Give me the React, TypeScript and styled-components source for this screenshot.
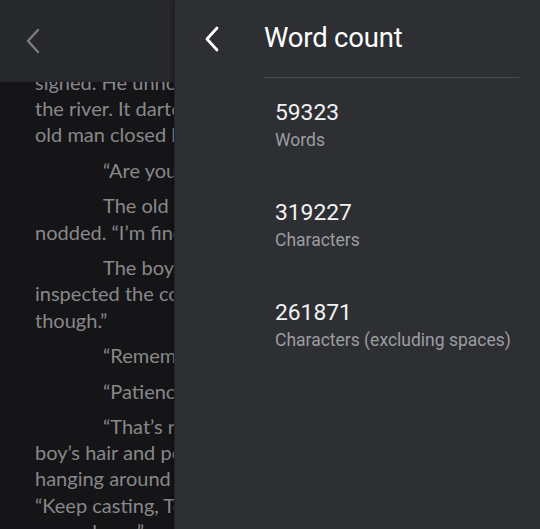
import styled, { createGlobalStyle } from 'styled-components';

const GlobalStyle = createGlobalStyle`
  html, body {
    margin: 0;
    padding: 0;
    background: #151517;
  }
  * { box-sizing: border-box; }
`;

const paragraphs: { indent: boolean; lines: string[] }[] = [
  {
    indent: false,
    lines: [
      'signed. He unhooked the fish and tossed it back into',
      'the river. It darted away into the deep water. The',
      'old man closed his eyes for a moment.',
    ],
  },
  { indent: true, lines: ['“Are you tired?” the boy asked.'] },
  { indent: true, lines: ['The old man opened his eyes and', 'nodded. “I’m fine. Just resting.”'] },
  {
    indent: true,
    lines: ['The boy reeled in his own line and', 'inspected the cork. “Nothing yet,', 'though.”'],
  },
  { indent: true, lines: ['“Remember what I told you.”'] },
  { indent: true, lines: ['“Patience.”'] },
  {
    indent: true,
    lines: [
      '“That’s right.” The old man ruffled the',
      'boy’s hair and pointed to the fish still',
      'hanging around the bend of the river.',
      '“Keep casting, Tommy. They haven’t',
      'coaxed you.”',
    ],
  },
];

const stats = [
  { value: '59323', label: 'Words' },
  { value: '319227', label: 'Characters' },
  { value: '261871', label: 'Characters (excluding spaces)' },
];

export default function App() {
  return (
    <>
      <GlobalStyle />
      <Screen>
        <Reader>
          <ReaderBar>
            <Chevron width="16" height="26" viewBox="0 0 16 26" stroke="#7b7c7f" strokeWidth={2.4}>
              <polyline points="13,2 3,13 13,24" />
            </Chevron>
          </ReaderBar>
          <Page>
            <Book>
              {paragraphs.map((p, i) => (
                <Para key={i}>
                  {p.lines.map((line, j) => (
                    <Line key={j} $indent={p.indent && j === 0}>
                      {line}
                    </Line>
                  ))}
                </Para>
              ))}
            </Book>
          </Page>
        </Reader>

        <Drawer>
          <DrawerHead>
            <BackButton>
              <svg width="16" height="26" viewBox="0 0 16 26" fill="none" stroke="#ffffff" strokeWidth={2.8} strokeLinecap="round" strokeLinejoin="round">
                <polyline points="13,2 3,13 13,24" />
              </svg>
            </BackButton>
            <Title>Word count</Title>
          </DrawerHead>
          <StatList>
            {stats.map((s) => (
              <Stat key={s.label}>
                <StatValue>{s.value}</StatValue>
                <StatLabel>{s.label}</StatLabel>
              </Stat>
            ))}
          </StatList>
        </Drawer>
      </Screen>
    </>
  );
}

const Screen = styled.div`
  position: relative;
  width: 540px;
  height: 529px;
  overflow: hidden;
  background: #151517;
`;

const Reader = styled.div`
  display: flex;
  flex-direction: column;
  height: 100%;
`;

const ReaderBar = styled.div`
  height: 82px;
  flex-shrink: 0;
  display: flex;
  align-items: center;
  padding-left: 25px;
  background: #27282b;
  position: relative;
  z-index: 1;
`;

const Chevron = styled.svg`
  fill: none;
  stroke-linecap: round;
  stroke-linejoin: round;
`;

const Page = styled.div`
  flex: 1;
  overflow: hidden;
  padding-left: 35px;
`;

const Book = styled.div`
  margin-top: -13px;
  font-family: Lato, 'DejaVu Sans', sans-serif;
  font-size: 20px;
  line-height: 26.2px;
  color: #88888a;
`;

const Para = styled.div`
  margin-bottom: 9.3px;
`;

const Line = styled.div<{ $indent: boolean }>`
  white-space: nowrap;
  padding-left: ${(p) => (p.$indent ? '68px' : '0')};
`;

const Drawer = styled.div`
  position: absolute;
  z-index: 2;
  top: 0;
  right: 0;
  bottom: 0;
  width: 366px;
  background: #2e2f33;
  border-left: 1px solid #232427;
  box-shadow: -2px 0 4px rgba(0, 0, 0, 0.25);
  font-family: Roboto, 'Liberation Sans', sans-serif;
`;

const DrawerHead = styled.div`
  height: 77px;
  display: flex;
  align-items: center;
  padding-bottom: 2px;
`;

const BackButton = styled.div`
  width: 89px;
  display: flex;
  padding-left: 29px;
  padding-top: 2px;
`;

const Title = styled.div`
  font-size: 27.5px;
  color: #ffffff;
  letter-spacing: -0.2px;
`;

const StatList = styled.div`
  margin: 0 21px 0 89px;
  border-top: 1px solid #4a4b50;
  padding-top: 22px;
  display: flex;
  flex-direction: column;
  gap: 49px;
`;

const Stat = styled.div`
  padding-left: 11px;
  display: flex;
  flex-direction: column;
  gap: 4px;
`;

const StatValue = styled.div`
  font-size: 22.8px;
  line-height: 26px;
  color: #f2f2f4;
`;

const StatLabel = styled.div`
  font-size: 17.5px;
  line-height: 21px;
  color: #9c9da1;
`;
